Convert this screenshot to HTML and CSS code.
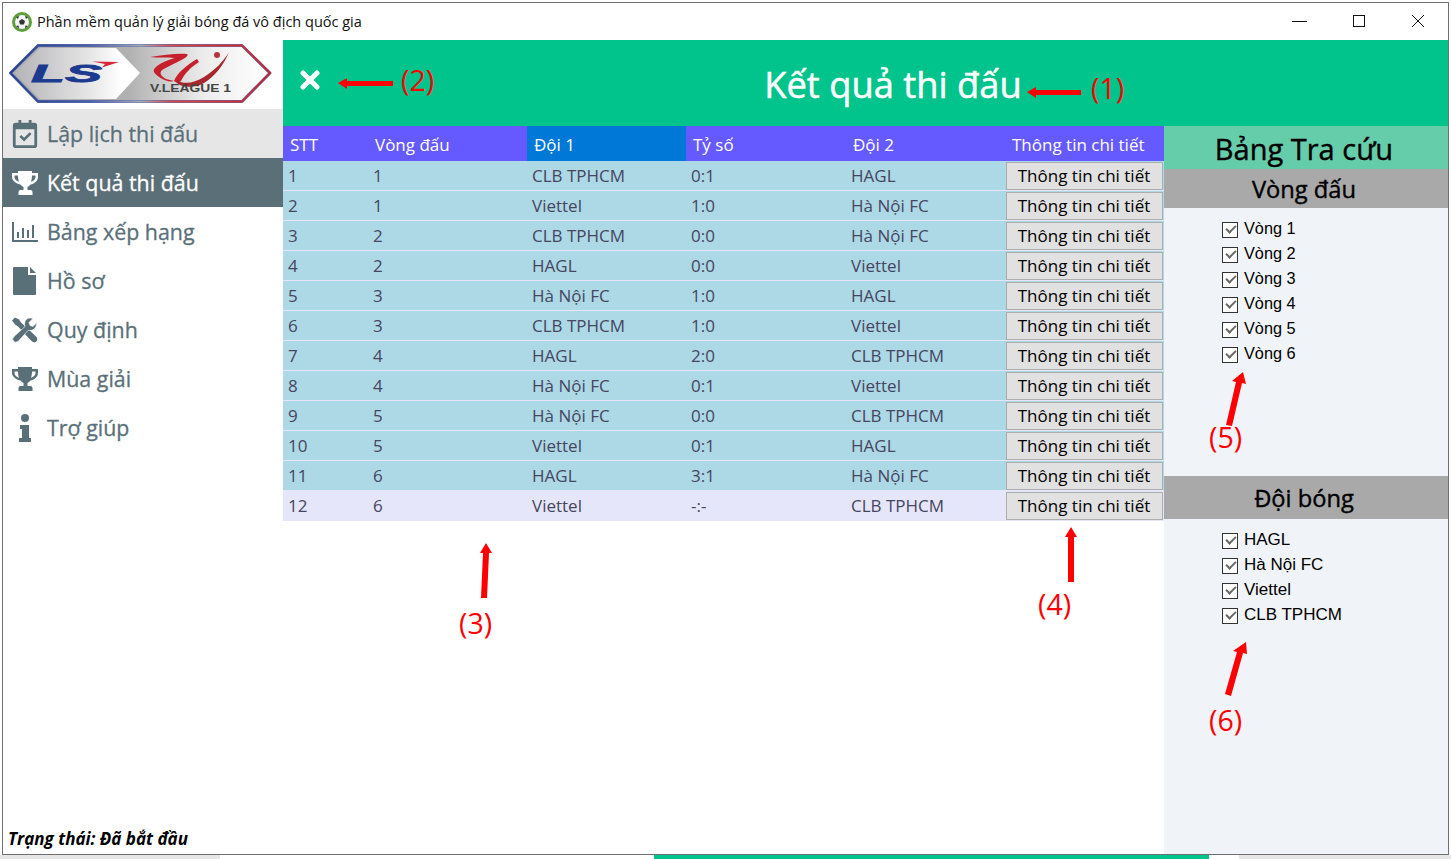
FILE: index.html
```html
<!DOCTYPE html>
<html lang="vi">
<head>
    <meta charset="UTF-8">
    <meta name="viewport" content="width=device-width, initial-scale=1.0">
    <title>Phần mềm quản lý giải bóng đá vô địch quốc gia</title>
    <link rel="stylesheet" href="styles.css">
</head>
<body>
    <div class="window">
        <div class="titlebar">
            <svg class="app-icon" viewBox="0 0 20 20">
                <circle cx="10" cy="10" r="10" fill="#5f9e3c"/>
                <circle cx="10" cy="10" r="7" fill="#f4f4f4"/>
                <path d="M10 7l3 2-1 3.500H8l-1-3.500z" fill="#333"/>
                <path d="M4 5l3-1-1 3zM16 5l-3-1 1 3zM4 14l2.500-.5L7 16.500zM16 14l-2.500-.5-.5 3z" fill="#333"/>
            </svg>
            <span class="app-name">Phần mềm quản lý giải bóng đá vô địch quốc gia</span>
            <div class="win-buttons">
                <span class="win-button"><svg width="16" height="16" viewBox="0 0 16 16"><path d="M0 8.500h15" stroke="#111" fill="none"/></svg></span>
                <span class="win-button"><svg width="16" height="16" viewBox="0 0 16 16"><rect x="2.500" y="2.500" width="11" height="11" stroke="#111" fill="none"/></svg></span>
                <span class="win-button"><svg width="16" height="16" viewBox="0 0 16 16"><path d="M2 2l12 12M14 2L2 14" stroke="#111" fill="none"/></svg></span>
            </div>
        </div>

        <div class="app">
            <aside class="sidebar">
                <div class="logo">
                    <svg width="264" height="62" viewBox="0 0 264 62">
                        <defs>
                            <linearGradient id="edge" x1="0" x2="1" y1="0" y2="0">
                                <stop offset="0" stop-color="#25408f"/>
                                <stop offset="0.3" stop-color="#4a5fa5"/>
                                <stop offset="0.5" stop-color="#a9a9b8"/>
                                <stop offset="0.62" stop-color="#d04a4e"/>
                                <stop offset="1" stop-color="#c9222c"/>
                            </linearGradient>
                            <linearGradient id="plate-left" x1="0" x2="1" y1="0" y2="0">
                                <stop offset="0" stop-color="#b4b4b8"/>
                                <stop offset="0.6" stop-color="#e6e6e6"/>
                                <stop offset="0.85" stop-color="#ffffff"/>
                                <stop offset="1" stop-color="#ffffff"/>
                            </linearGradient>
                            <linearGradient id="plate-right" x1="0" x2="1" y1="0" y2="0">
                                <stop offset="0.45" stop-color="#b0b0b0"/>
                                <stop offset="0.75" stop-color="#ededed"/>
                                <stop offset="1" stop-color="#ffffff"/>
                            </linearGradient>
                        </defs>
                        <path d="M1.500 30L29 2.500H233L261 30L233 58.500H29Z" fill="url(#plate-right)" stroke="#5a6dab" stroke-width="3" stroke-linejoin="round"/>
                        <path d="M1.500 30L29 2.500H233L261 30L233 58.500H29Z" fill="none" stroke="url(#edge)" stroke-width="1.800" stroke-linejoin="round"/>
                        <path d="M6 30L31 5H107L131 30L107 56H31Z" fill="url(#plate-left)"/>
                        <text class="logo-ls" x="22" y="39" textLength="71" lengthAdjust="spacingAndGlyphs">LS</text>
                        <path d="M83 18.500L110 19L93 24.500L96 21Z" fill="#d8283a"/>
                        <path d="M141 14C155 12 168 10 178 11C182 14 165 20 153 27C150 30 152 33 157 36L165 38C158 40 148 34 145 29C143 24 155 18 166 15C158 14 150 15 141 14Z" fill="#c5202c"/>
                        <path d="M165 38C168 30 178 22 188 16L190 19C182 24 176 30 172 38L168 40Z" fill="#c5202c"/>
                        <path d="M168 37C175 42 185 40 195 34C205 28 215 18 220 9C215 22 205 34 195 40C185 46 172 44 168 40Z" fill="#a8262e"/>
                        <circle cx="208" cy="12" r="3" fill="#b8343c"/>
                        <text class="logo-league" x="141" y="49" textLength="81" lengthAdjust="spacingAndGlyphs">V.LEAGUE 1</text>
                    </svg>
                </div>
                <nav class="nav">
                    <a class="nav-item nav-soft">
                        <svg class="nav-icon" viewBox="0 0 26 30"><path fill-rule="evenodd" d="M6 0h3v3h8V0h3v3h3a3 3 0 0 1 3 3v21a3 3 0 0 1-3 3H3a3 3 0 0 1-3-3V6a3 3 0 0 1 3-3h3zM3 10v17h20V10z"/><path d="M7 18l2-2 3 3 6-6 2 2-8 8z"/></svg>
                        <span>Lập lịch thi đấu</span>
                    </a>
                    <a class="nav-item nav-active">
                        <svg class="nav-icon" viewBox="0 0 26 24"><use href="#cup"/></svg>
                        <span>Kết quả thi đấu</span>
                    </a>
                    <a class="nav-item">
                        <svg class="nav-icon" viewBox="0 0 26 20"><path d="M0 0h2v18h24v2H0zM5 10h2v6H5zM10 6h2v10h-2zM15 8h2v8h-2zM20 3h2v13h-2z"/></svg>
                        <span>Bảng xếp hạng</span>
                    </a>
                    <a class="nav-item">
                        <svg class="nav-icon" viewBox="0 0 26 28"><path d="M2 0h14v8h8v19a1 1 0 0 1-1 1H2a1 1 0 0 1-1-1V1a1 1 0 0 1 1-1zM18 0l6 6h-6z"/></svg>
                        <span>Hồ sơ</span>
                    </a>
                    <a class="nav-item">
                        <svg class="nav-icon" viewBox="0 0 26 25"><path d="M0 3L3 0L7 2L9 5L22 17L25 20Q26 24 22.500 25Q21 25 19 23L6 9L3 7Z"/><path d="M25 5L21 9L18 8L17 5L21 1Q15-1 13 4Q12 7 13 9L2 19Q0 21 1 23Q3 26 6 24L16 13Q24 14 25 5Z" stroke="#fff" stroke-width="0.600"/></svg>
                        <span>Quy định</span>
                    </a>
                    <a class="nav-item">
                        <svg class="nav-icon" viewBox="0 0 26 24">
                            <defs>
                                <path id="cup" d="M6 0h14v2h6v4c0 4-4 7-7.500 7.500-.8 1.200-2 2-3 2.500v3h3a2 2 0 0 1 2 2v3H6.500v-3a2 2 0 0 1 2-2h3v-3c-1-.5-2.200-1.300-3-2.500C5 13 0 10 0 6V2h6zM2.500 4.500V6c0 2 2 4 4.500 5-.6-2-1-4-1-6.500zM23.500 4.500H20c0 2.500-.4 4.500-1 6.500 2.500-1 4.500-3 4.500-5z"/>
                            </defs>
                            <use href="#cup"/>
                        </svg>
                        <span>Mùa giải</span>
                    </a>
                    <a class="nav-item">
                        <svg class="nav-icon" viewBox="0 0 26 28"><circle cx="13" cy="4" r="4"/><path d="M8 11h9v13h2v4H7v-4h3v-9H8z"/></svg>
                        <span>Trợ giúp</span>
                    </a>
                </nav>
                <div class="status">Trạng thái: Đã bắt đầu</div>
            </aside>

            <main class="content">
                <header class="header">
                    <button class="close-btn" type="button">
                        <svg width="20" height="20" viewBox="0 0 20 20"><path d="M3 3l14 14M17 3L3 17" stroke="#fff" stroke-width="5" stroke-linecap="round"/></svg>
                    </button>
                    <h1 class="page-title">Kết quả thi đấu</h1>
                </header>

                <div class="columns">
                    <table class="results">
                        <colgroup>
                            <col class="col-stt"><col class="col-wide"><col class="col-wide"><col class="col-score"><col class="col-wide"><col class="col-wide">
                        </colgroup>
                        <thead>
                            <tr>
                                <th>STT</th><th>Vòng đấu</th><th class="sorted">Đội 1</th><th>Tỷ số</th><th>Đội 2</th><th>Thông tin chi tiết</th>
                            </tr>
                        </thead>
                        <tbody>
                            <tr><td>1</td><td>1</td><td>CLB TPHCM</td><td>0:1</td><td>HAGL</td><td class="cell-btn"><button type="button">Thông tin chi tiết</button></td></tr>
                            <tr><td>2</td><td>1</td><td>Viettel</td><td>1:0</td><td>Hà Nội FC</td><td class="cell-btn"><button type="button">Thông tin chi tiết</button></td></tr>
                            <tr><td>3</td><td>2</td><td>CLB TPHCM</td><td>0:0</td><td>Hà Nội FC</td><td class="cell-btn"><button type="button">Thông tin chi tiết</button></td></tr>
                            <tr><td>4</td><td>2</td><td>HAGL</td><td>0:0</td><td>Viettel</td><td class="cell-btn"><button type="button">Thông tin chi tiết</button></td></tr>
                            <tr><td>5</td><td>3</td><td>Hà Nội FC</td><td>1:0</td><td>HAGL</td><td class="cell-btn"><button type="button">Thông tin chi tiết</button></td></tr>
                            <tr><td>6</td><td>3</td><td>CLB TPHCM</td><td>1:0</td><td>Viettel</td><td class="cell-btn"><button type="button">Thông tin chi tiết</button></td></tr>
                            <tr><td>7</td><td>4</td><td>HAGL</td><td>2:0</td><td>CLB TPHCM</td><td class="cell-btn"><button type="button">Thông tin chi tiết</button></td></tr>
                            <tr><td>8</td><td>4</td><td>Hà Nội FC</td><td>0:1</td><td>Viettel</td><td class="cell-btn"><button type="button">Thông tin chi tiết</button></td></tr>
                            <tr><td>9</td><td>5</td><td>Hà Nội FC</td><td>0:0</td><td>CLB TPHCM</td><td class="cell-btn"><button type="button">Thông tin chi tiết</button></td></tr>
                            <tr><td>10</td><td>5</td><td>Viettel</td><td>0:1</td><td>HAGL</td><td class="cell-btn"><button type="button">Thông tin chi tiết</button></td></tr>
                            <tr><td>11</td><td>6</td><td>HAGL</td><td>3:1</td><td>Hà Nội FC</td><td class="cell-btn"><button type="button">Thông tin chi tiết</button></td></tr>
                            <tr class="row-pending"><td>12</td><td>6</td><td>Viettel</td><td>-:-</td><td>CLB TPHCM</td><td class="cell-btn"><button type="button">Thông tin chi tiết</button></td></tr>
                        </tbody>
                    </table>

                    <aside class="lookup">
                        <h2 class="lookup-title">Bảng Tra cứu</h2>
                        <h3 class="lookup-head head-round">Vòng đấu</h3>
                        <ul class="check-list list-round">
                            <li><i class="box"></i>Vòng 1</li>
                            <li><i class="box"></i>Vòng 2</li>
                            <li><i class="box"></i>Vòng 3</li>
                            <li><i class="box"></i>Vòng 4</li>
                            <li><i class="box"></i>Vòng 5</li>
                            <li><i class="box"></i>Vòng 6</li>
                        </ul>
                        <h3 class="lookup-head head-team">Đội bóng</h3>
                        <ul class="check-list list-team">
                            <li><i class="box"></i>HAGL</li>
                            <li><i class="box"></i>Hà Nội FC</li>
                            <li><i class="box"></i>Viettel</li>
                            <li><i class="box"></i>CLB TPHCM</li>
                        </ul>
                    </aside>
                </div>
            </main>
        </div>
    </div>

    <div class="taskbar">
        <span class="seg seg-grey1"></span>
        <span class="seg seg-white1"></span>
        <span class="seg seg-green"></span>
        <span class="seg seg-white2"></span>
        <span class="seg seg-grey2"></span>
    </div>

    <!-- red notes drawn over the screenshot -->
    <svg class="notes" width="1451" height="859" viewBox="0 0 1451 859">
        <g fill="#fe0000">
            <path d="M1027 92l9-5v3h45v5h-45v3z"/>
            <path d="M338 83l9-5v3h46v5h-46v3z"/>
            <path d="M486 543l6 10h-3l-2 45h-6l2-45h-3z"/>
            <path d="M1071 527l6 10h-3v45h-6v-45h-3z"/>
            <path d="M1243 372l3 12-4-1-10 43-6-1 10-43-4-1z"/>
            <path d="M1246 642l1 12-4-1-12 43-6-2 12-42-4-1z"/>
        </g>
        <g class="note-text">
            <text x="1091" y="99">(1)</text>
            <text x="401" y="91">(2)</text>
            <text x="459" y="634">(3)</text>
            <text x="1038" y="615">(4)</text>
            <text x="1209" y="448">(5)</text>
            <text x="1209" y="731">(6)</text>
        </g>
    </svg>
</body>
</html>
```

FILE: styles.css
```css
html, body {
    margin: 0;
    padding: 0;
}
body {
    width: 1451px;
    height: 859px;
    overflow: hidden;
    background: #fff;
    font-family: "Open Sans", "Noto Sans", sans-serif;
    position: relative;
}
.window {
    box-sizing: border-box;
    width: 1447px;
    height: 853px;
    margin: 2px 0 0 2px;
    border: 1px solid #707070;
    display: flex;
    flex-direction: column;
    background: #fff;
}

/* title bar */
.titlebar {
    height: 37px;
    flex: none;
    display: flex;
    align-items: center;
    padding-left: 9px;
}
.app-icon {
    width: 20px;
    height: 20px;
    margin-right: 5px;
}
.app-name {
    font-size: 14.500px;
    color: #111;
}
.win-buttons {
    margin-left: auto;
    margin-right: 1px;
    display: flex;
    position: relative;
    top: -1px;
}
.win-button {
    width: 59px;
    display: flex;
    justify-content: center;
    align-items: center;
}

.app {
    flex: 1;
    display: flex;
    min-height: 0;
}

/* left menu */
.sidebar {
    width: 280px;
    flex: none;
    display: flex;
    flex-direction: column;
}
.logo {
    height: 69px;
    padding: 3px 0 0 6px;
    box-sizing: border-box;
}
.logo-ls {
    font-family: "Liberation Sans", sans-serif;
    font-size: 24px;
    font-weight: 700;
    font-style: italic;
    fill: #1c3a8f;
    stroke: #1c3a8f;
    stroke-width: 0.800px;
}
.logo-league {
    font-family: "Liberation Sans", sans-serif;
    font-size: 10px;
    font-weight: 700;
    fill: #444;
}
.nav-item {
    height: 49px;
    display: flex;
    align-items: center;
    padding-left: 9px;
    color: #5a7079;
    font-size: 21.400px;
    -webkit-text-stroke: 0.3px currentColor;
}
.nav-item span {
    margin-left: 9px;
}
.nav-icon {
    width: 26px;
    height: 28px;
    fill: #5a7079;
    flex: none;
}
.nav-soft {
    background: #e6e6e6;
}
.nav-active {
    background: #5a6f77;
    color: #fff;
}
.nav-active .nav-icon {
    fill: #fff;
}
.status {
    margin-top: auto;
    padding: 0 0 4px 5px;
    font-size: 17px;
    font-weight: 700;
    font-style: italic;
    color: #000;
}

/* right part */
.content {
    flex: 1;
    display: flex;
    flex-direction: column;
    min-width: 0;
}
.header {
    height: 86px;
    flex: none;
    background: #00c48c;
    display: flex;
    align-items: center;
}
.close-btn {
    width: 55px;
    height: 86px;
    flex: none;
    padding: 0 0 6px 17px;
    border: none;
    background: none;
    display: flex;
    align-items: center;
}
.page-title {
    flex: 1;
    margin: 0;
    padding-top: 2px;
    text-align: center;
    font-size: 36.300px;
    font-weight: 400;
    color: #fff;
    -webkit-text-stroke: 0.5px #fff;
}
.columns {
    flex: 1;
    display: flex;
    min-height: 0;
}

/* results table */
.results {
    width: 881px;
    flex: none;
    align-self: flex-start;
    table-layout: fixed;
    border-collapse: separate;
    border-spacing: 0;
    font-size: 17px;
    color: #46465f;
}
.col-stt { width: 85px; }
.col-wide { width: 159px; }
.col-score { width: 160px; }
.results th {
    height: 35px;
    padding: 1px 0 0 7px;
    box-sizing: border-box;
    background: #655aff;
    color: #fff;
    font-weight: 400;
    text-align: left;
}
.results th.sorted {
    background: #0078d7;
}
.results td {
    height: 30px;
    box-sizing: border-box;
    padding: 0 0 0 5px;
    background: #add8e6;
    border-bottom: 1px solid #e6e6fa;
}
.results .row-pending td {
    background: #e6e6fa;
}
.results td.cell-btn {
    padding: 1px 1px 0 1px;
}
.cell-btn button {
    display: block;
    box-sizing: border-box;
    width: 100%;
    height: 28px;
    padding: 0 1px 2px 0;
    border: 1px solid #adadad;
    background: #e1e1e1;
    color: #000;
    font-family: inherit;
    font-size: 17px;
}

/* lookup panel */
.lookup {
    flex: 1;
    background: #f0f4f8;
    display: flex;
    flex-direction: column;
}
.lookup-title {
    height: 43px;
    margin: 0;
    padding-right: 4px;
    background: #66cdaa;
    color: #000;
    text-align: center;
    font-size: 29px;
    font-weight: 400;
    line-height: 46px;
    -webkit-text-stroke: 0.4px #000;
}
.lookup-head {
    margin: 0;
    padding-right: 4px;
    background: #a9a9a9;
    color: #000;
    text-align: center;
    font-size: 23.700px;
    font-weight: 400;
    -webkit-text-stroke: 0.4px #000;
}
.head-round {
    height: 39px;
    line-height: 40px;
}
.head-team {
    height: 43px;
    line-height: 45px;
}
.check-list {
    list-style: none;
    margin: 0;
    padding: 8px 0 0 58px;
    font-family: "Liberation Sans", sans-serif;
    font-size: 16.300px;
    color: #000;
}
.list-round {
    height: 268px;
    box-sizing: border-box;
}
.list-team {
    font-size: 17px;
}
.check-list li {
    height: 25px;
    display: flex;
    align-items: center;
}
.box {
    box-sizing: border-box;
    width: 16px;
    height: 16px;
    margin-right: 6px;
    border: 1px solid #333;
    background: #fff;
    position: relative;
    top: 1px;
}
.box::after {
    content: "";
    position: absolute;
    left: 3px;
    top: 2px;
    width: 8px;
    height: 4px;
    border-left: 2px solid #6a6a6a;
    border-bottom: 2px solid #6a6a6a;
    transform: rotate(-45deg);
}

/* what shows below the window */
.taskbar {
    display: flex;
    height: 4px;
}
.seg-grey1 { width: 220px; background: #e6e6e6; }
.seg-white1 { width: 434px; background: #fff; }
.seg-green { width: 555px; background: #00c48c; }
.seg-white2 { width: 30px; background: #fff; }
.seg-grey2 { flex: 1; background: #e6e6e6; }

.notes {
    position: absolute;
    left: 0;
    top: 0;
    pointer-events: none;
}
.note-text text {
    font-family: "Open Sans", sans-serif;
    font-size: 28.500px;
    fill: #fe0000;
}
```
